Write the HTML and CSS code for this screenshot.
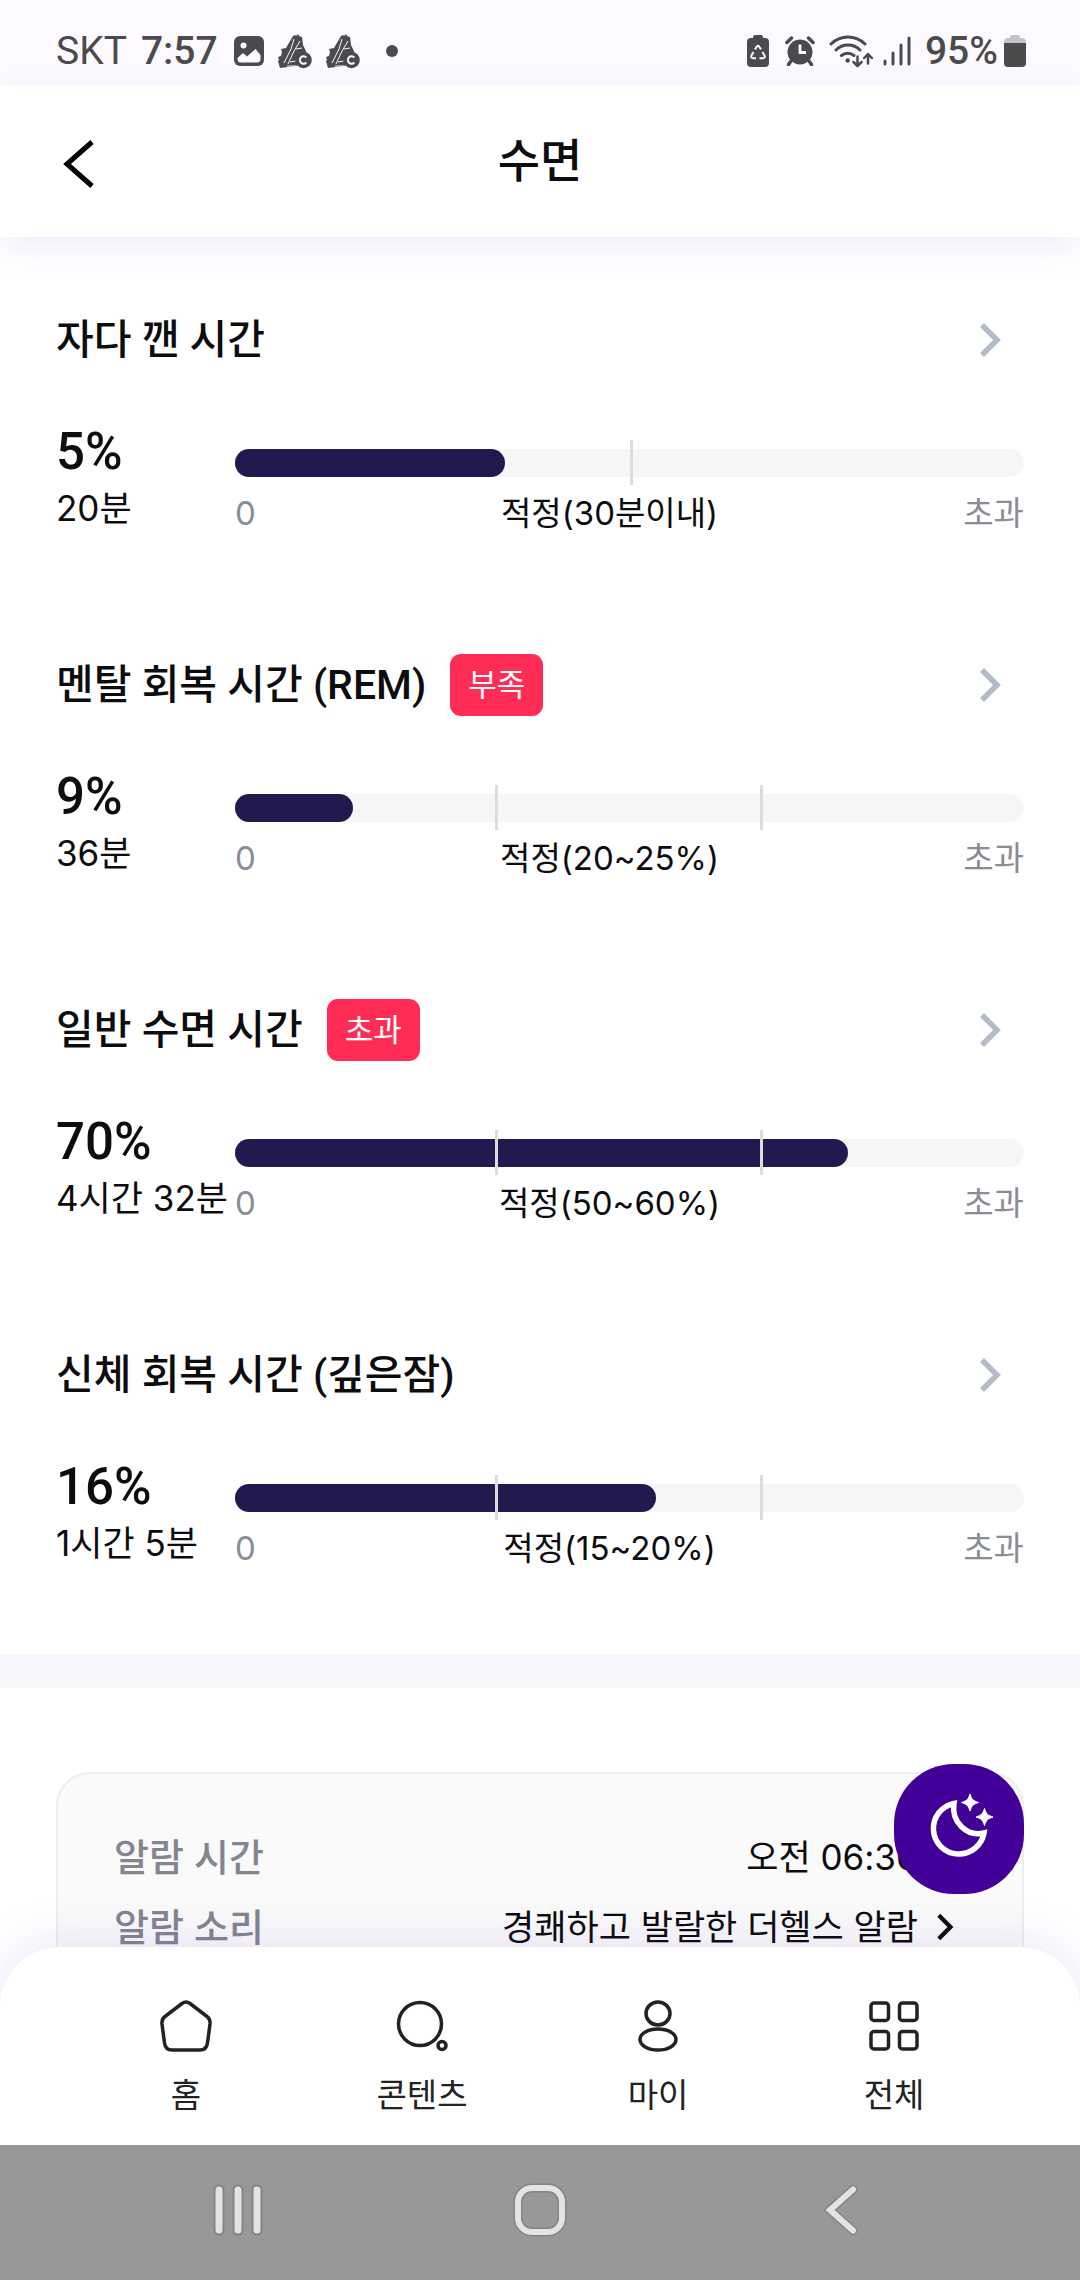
FILE: index.html
```html
<!DOCTYPE html>
<html lang="ko">
<head>
<meta charset="utf-8">
<meta name="viewport" content="width=device-width, initial-scale=1">
<title>수면</title>
<link rel="stylesheet" href="styles.css">
</head>
<body>
<svg class="defs" width="0" height="0" aria-hidden="true">
  <symbol id="chevron" viewBox="0 0 22 36"><path d="M3 3l15 15L3 33" fill="none" stroke="currentColor" stroke-width="5.5"/></symbol>
  <symbol id="shoe" viewBox="0 0 34 36">
    <path d="M15 3l2-1 1 1 2-2 1 2 3 1 1 8 3 6-2 10-8 5-8 1-8 1-2-7 1-1-1-3 3-1 1-4-1-3 5-1z" fill="currentColor"/>
    <path d="M16 6l-3 10-7 14M22 8l-6 10-6 13M18 16l6-1M12 29l6-1M9 33h9" fill="none" stroke="#fcfaff" stroke-width="1"/>
    <circle cx="25.500" cy="27" r="8.300" fill="currentColor"/>
    <path d="M28.300 24.500a3.600 3.800 0 1 0 0 5" fill="none" stroke="#fcfaff" stroke-width="2"/>
  </symbol>
</svg>
<div class="app">
  <div class="statusbar">
    <span class="carrier">SKT</span>
    <span class="clock">7:57</span>
    <svg class="ic-image" viewBox="0 0 30 30"><rect width="30" height="30" rx="6" fill="currentColor"/><circle cx="9.500" cy="9.500" r="3" fill="#fcfaff"/><path d="M3.500 22l5.500-5 4 3.500 8.500-7.500 5 6v4a3.500 3.500 0 0 1-3.500 3.500H7A3.500 3.500 0 0 1 3.500 23z" fill="#fcfaff"/></svg>
    <svg class="ic-shoe"><use href="#shoe"/></svg>
    <svg class="ic-shoe"><use href="#shoe"/></svg>
    <span class="dot"></span>
    <span class="spacer"></span>
    <svg class="ic-saver" viewBox="0 0 22 32"><path d="M6 3V2a2 2 0 0 1 2-2h6a2 2 0 0 1 2 2v1h2a4 4 0 0 1 4 4v21a4 4 0 0 1-4 4H4a4 4 0 0 1-4-4V7a4 4 0 0 1 4-4z" fill="currentColor"/><path d="M8 14.500l2-3.300a1.200 1.200 0 0 1 2 0l2 3.300M15.500 17l2 3.500a1.800 1.800 0 0 1-1.500 2.800h-3.500M9 23.300H6a1.800 1.800 0 0 1-1.500-2.800L6.500 17" fill="none" stroke="#fcfaff" stroke-width="2"/></svg>
    <svg class="ic-alarm" viewBox="0 0 30 30"><circle cx="15" cy="16" r="12.500" fill="currentColor"/><path d="M2 6.500L6.500 2M28 6.500L23.500 2M6 25l-2.500 3.500M24 25l2.500 3.500" stroke="currentColor" stroke-width="3.500" stroke-linecap="round"/><path d="M15 8.500v8h6" fill="none" stroke="#fcfaff" stroke-width="2.800"/></svg>
    <svg class="ic-wifi" viewBox="0 0 44 34"><g fill="none" stroke="currentColor" stroke-width="3" stroke-linecap="round" stroke-linejoin="round"><path d="M2 10a24 24 0 0 1 34 0M7 16a17 17 0 0 1 24 0M12.500 21.500a10 10 0 0 1 12.500 0"/><path d="M28.500 22.500v9M24.500 28l4 4 4-4M39 29.500v-9M35.200 24l3.800-4 3.800 4" stroke-width="2.500"/></g><circle cx="18.700" cy="26.500" r="2.200" fill="currentColor"/></svg>
    <svg class="ic-signal" viewBox="0 0 28 30"><path d="M2 25v3M10 17v11M18 9v19M26 2v26" stroke="currentColor" stroke-width="3" stroke-linecap="round"/></svg>
    <span class="percent">95%</span>
    <svg class="ic-battery" viewBox="0 0 22 32"><path d="M6 3V2a2 2 0 0 1 2-2h6a2 2 0 0 1 2 2v1h2a4 4 0 0 1 4 4v2H0V7a4 4 0 0 1 4-4z" fill="#c4c3c6"/><path d="M0 8h22v20a4 4 0 0 1-4 4H4a4 4 0 0 1-4-4z" fill="currentColor"/></svg>
  </div>

  <header class="header">
    <button class="back" type="button" aria-label="뒤로"><svg viewBox="0 0 32 48"><path d="M29 2L4 24l25 22" fill="none" stroke="currentColor" stroke-width="5"/></svg></button>
    <h1 class="title">수면</h1>
  </header>

  <main class="content">
    <div class="stats">
      <section class="stat">
        <a class="stat-head" href="#awake"><h2>자다 깬 시간</h2><svg class="chevron"><use href="#chevron"/></svg></a>
        <div class="stat-body">
          <div class="value"><strong>5%</strong><span>20분</span></div>
          <div class="gauge">
            <div class="track"><div class="fill" style="width:34.2%"></div><i class="tick tick-half"></i></div>
            <div class="scale"><span>0</span><b>적정(30분이내)</b><span>초과</span></div>
          </div>
        </div>
      </section>
      <section class="stat">
        <a class="stat-head" href="#rem"><h2>멘탈 회복 시간 (REM)</h2><span class="badge">부족</span><svg class="chevron"><use href="#chevron"/></svg></a>
        <div class="stat-body">
          <div class="value"><strong>9%</strong><span>36분</span></div>
          <div class="gauge">
            <div class="track"><div class="fill" style="width:15%"></div><i class="tick tick-low"></i><i class="tick tick-high"></i></div>
            <div class="scale"><span>0</span><b>적정(20~25%)</b><span>초과</span></div>
          </div>
        </div>
      </section>
      <section class="stat">
        <a class="stat-head" href="#light"><h2>일반 수면 시간</h2><span class="badge">초과</span><svg class="chevron"><use href="#chevron"/></svg></a>
        <div class="stat-body">
          <div class="value"><strong>70%</strong><span>4시간 32분</span></div>
          <div class="gauge">
            <div class="track"><div class="fill" style="width:77.7%"></div><i class="tick tick-low"></i><i class="tick tick-high"></i></div>
            <div class="scale"><span>0</span><b>적정(50~60%)</b><span>초과</span></div>
          </div>
        </div>
      </section>
      <section class="stat">
        <a class="stat-head" href="#deep"><h2>신체 회복 시간 (깊은잠)</h2><svg class="chevron"><use href="#chevron"/></svg></a>
        <div class="stat-body">
          <div class="value"><strong>16%</strong><span>1시간 5분</span></div>
          <div class="gauge">
            <div class="track"><div class="fill" style="width:53.4%"></div><i class="tick tick-low"></i><i class="tick tick-high"></i></div>
            <div class="scale"><span>0</span><b>적정(15~20%)</b><span>초과</span></div>
          </div>
        </div>
      </section>
    </div>
    <div class="divider"></div>
    <dl class="alarm">
      <div class="alarm-row"><dt>알람 시간</dt><dd>오전 06:30</dd></div>
      <div class="alarm-row"><dt>알람 소리</dt><dd>경쾌하고 발랄한 더헬스 알람</dd><svg class="alarm-chevron"><use href="#chevron"/></svg></div>
    </dl>
  </main>

  <div class="dock">
    <button class="fab" type="button" aria-label="수면 시작">
      <svg viewBox="-4 3 64 64"><path d="M23 9.500A25.500 25.500 0 1 0 53 39C36 43 20 28 23 9.500Z" fill="none" stroke="#fff" stroke-width="5.500"/><path d="M39 0c2 6 3 6.500 8.500 8.500-5.500 2-6.500 2.500-8.500 8.500-2-6-3-6.500-8.500-8.500 5.500-2 6.500-2.500 8.500-8.500zM53.500 14.500c2 6 3 6.500 8.500 8.500-5.500 2-6.500 2.500-8.500 8.500-2-6-3-6.500-8.500-8.500 5.500-2 6.500-2.500 8.500-8.500z" fill="#fff" stroke="#fff" stroke-linejoin="round"/></svg>
    </button>
    <nav class="tabbar">
      <a href="#home"><svg viewBox="0 0 52 52"><path d="M22 3.500Q26 0.500 30 3.500L47 16.500Q50.500 19 50 24L47.500 43Q46.500 50 40 50H12Q5.500 50 4.500 43L2 24Q1.500 19 5 16.500Z"/></svg>홈</a>
      <a href="#contents"><svg viewBox="0 0 52 52"><circle cx="24" cy="24" r="21.500"/><circle cx="46" cy="45.500" r="4"/></svg>콘텐츠</a>
      <a href="#my"><svg viewBox="0 0 52 52"><ellipse cx="26" cy="13.500" rx="12" ry="11.500"/><ellipse cx="26" cy="39.500" rx="18" ry="10.500"/></svg>마이</a>
      <a href="#all"><svg viewBox="0 0 52 52"><rect x="3" y="3" width="17.500" height="17.500" rx="3"/><rect x="31.500" y="3" width="17.500" height="17.500" rx="3"/><rect x="3" y="31.500" width="17.500" height="17.500" rx="3"/><rect x="31.500" y="31.500" width="17.500" height="17.500" rx="3"/></svg>전체</a>
    </nav>
  </div>

  <div class="sysnav">
    <button type="button" aria-label="최근 앱"><svg viewBox="0 0 60 60"><g stroke="#858383" stroke-width="11"><path d="M11 10v40M30 10v40M49 10v40"/></g><path d="M11 10v40M30 10v40M49 10v40" stroke-width="7"/></svg></button>
    <button type="button" aria-label="홈"><svg viewBox="0 0 60 60"><rect x="8" y="8" width="44" height="44" rx="14" stroke="#858383" stroke-width="9"/><rect x="8" y="8" width="44" height="44" rx="14"/></svg></button>
    <button type="button" aria-label="뒤로 가기"><svg viewBox="0 0 60 60"><path d="M41 9.500L18 30l23 20.500" stroke="#858383" stroke-width="9"/><path d="M41 9.500L18 30l23 20.500"/></svg></button>
  </div>
</div>
</body>
</html>
```
FILE: styles.css
```css
* { box-sizing: border-box; }

body {
  margin: 0;
  background: #fff;
  color: #0d0d0f;
  font-family: Inter, "Noto Sans CJK KR", sans-serif;
  font-size: 35px;
}

h1, h2, dl, dd { margin: 0; }
a { color: inherit; text-decoration: none; }
button { padding: 0; border: 0; background: none; color: inherit; font: inherit; }
svg { display: block; flex: none; }
.defs { position: absolute; }

.app {
  display: flex;
  flex-direction: column;
  height: 100vh;
}

/* Phone status bar */
.statusbar {
  display: flex;
  flex: none;
  align-items: center;
  height: 85px;
  padding: 16px 54px 0 56px;
  background: #fcfaff;
  color: #4c4a4d;
  font-family: Roboto, sans-serif;
  font-size: 39px;
  line-height: 70px;
}
.clock { margin-left: 14px; font-weight: 500; }
.ic-image { width: 30px; height: 30px; margin-left: 16px; }
.ic-shoe { width: 34px; height: 36px; margin-left: 14px; }
.dot { width: 12px; height: 12px; margin-left: 26px; border-radius: 50%; background: currentColor; }
.spacer { flex: 1; }
.ic-saver { width: 22px; height: 32px; }
.ic-alarm { width: 30px; height: 30px; margin-left: 16px; }
.ic-wifi { width: 44px; height: 34px; margin-left: 14px; }
.ic-signal { width: 28px; height: 30px; margin-left: 10px; }
.percent { margin-left: 14px; font-weight: 500; }
.ic-battery { width: 22px; height: 32px; margin-left: 6px; }

/* Page header */
.header {
  display: grid;
  flex: none;
  grid-template-columns: 1fr auto 1fr;
  align-items: center;
  position: relative;
  z-index: 1;
  height: 152px;
  padding: 0 63px;
  background: #fff;
  box-shadow: 0 12px 32px rgba(67, 0, 200, 0.08);
}
.back { width: 32px; height: 48px; margin-top: 6px; color: #000; }
.back svg { width: 32px; height: 48px; }
.title {
  font-family: Roboto, "Noto Sans CJK KR", sans-serif;
  font-size: 46px;
  font-weight: 500;
  line-height: 60px;
}

.content { flex: 1; min-height: 0; overflow: hidden; }
.stats {
  display: flex;
  flex-direction: column;
  gap: 117px;
  padding: 72px 56px 82px;
}
.stat-head {
  display: flex;
  align-items: center;
  height: 62px;
  margin-bottom: 51px;
  padding-right: 23px;
}
.stat-head h2 {
  font-family: Roboto, "Noto Sans CJK KR", sans-serif;
  font-size: 41px;
  font-weight: 500;
  line-height: 62px;
}
.badge {
  margin-left: 24px;
  padding: 0 18px;
  border-radius: 11px;
  background: #ff2d55;
  color: #fff;
  font-size: 31px;
  line-height: 62px;
}
.chevron { width: 22px; height: 36px; margin-left: auto; color: #b4bbc8; }

.stat-body { display: flex; }
.value { flex: none; width: 179px; padding-top: 1px; white-space: nowrap; }
.value strong,
.value span { display: block; line-height: 57px; }
.value strong { font-family: Roboto, sans-serif; font-size: 51px; font-weight: 500; }
.gauge { flex: 1; padding-top: 27px; }
.track { position: relative; height: 28px; border-radius: 14px; background: #f6f6f6; }
.fill { height: 28px; border-radius: 14px; background: #23194f; }
.tick { position: absolute; top: -9px; width: 3px; height: 45px; background: #dcdcdc; }
.tick-half { left: 50%; }
.tick-low { left: 33%; }
.tick-high { left: 66.6%; }
.scale {
  display: flex;
  justify-content: space-between;
  margin-top: 12px;
  color: #8b8d94;
  font-size: 33px;
  line-height: 48px;
}
.scale b { color: #0d0d0f; font-weight: 400; }

.divider { height: 34px; background: #f5f7fa; }

.alarm {
  margin: 84px 56px 0;
  padding: 48px 56px 120px;
  border: 2px solid #eee;
  border-radius: 34px;
  background: #fafafa;
}
.alarm-row {
  display: grid;
  grid-template-columns: auto 1fr 48px;
  align-items: center;
  line-height: 70px;
}
.alarm-row dt { color: #85858f; font-size: 38px; font-weight: 500; }
.alarm-row dd { text-align: right; }
.alarm-chevron { width: 18px; height: 28px; margin-left: 18px; }

/* Tab bar with the floating sleep button */
.dock { position: relative; flex: none; z-index: 1; margin-top: -60px; }
.tabbar {
  display: grid;
  grid-template-columns: repeat(4, 1fr);
  height: 198px;
  padding: 53px 68px 0;
  border-radius: 60px 60px 0 0;
  background: #fff;
  box-shadow: 0 -6px 50px rgba(67, 0, 200, 0.1);
  color: #222;
  font-size: 33px;
  line-height: 50px;
}
.tabbar a { display: flex; flex-direction: column; align-items: center; gap: 18px; }
.tabbar svg { width: 52px; height: 52px; fill: none; stroke: #222; stroke-width: 3.5; }
.fab {
  display: grid;
  place-items: center;
  position: absolute;
  right: 56px;
  bottom: 251px;
  width: 130px;
  height: 130px;
  border-radius: 60px;
  background: #430098;
}
.fab svg { width: 64px; height: 64px; overflow: visible; }

/* Phone navigation keys */
.sysnav {
  display: flex;
  flex: none;
  align-items: center;
  justify-content: space-between;
  position: relative;
  z-index: 2;
  height: 135px;
  padding: 0 208px 6px;
  background: #999797;
}
.sysnav svg {
  width: 60px;
  height: 60px;
  fill: none;
  stroke: #e4e2e3;
  stroke-width: 6;
  stroke-linecap: round;
}
```
